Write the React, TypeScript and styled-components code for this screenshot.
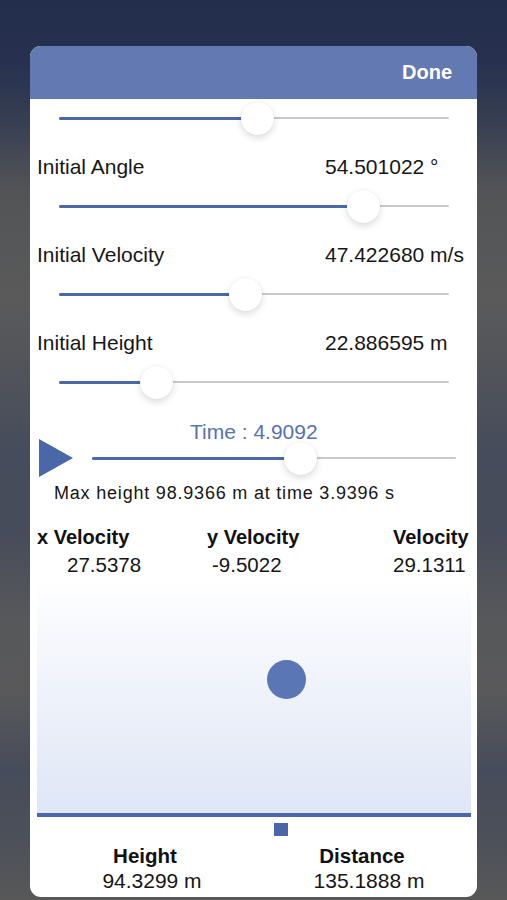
import React from 'react';
import styled, { createGlobalStyle } from 'styled-components';

// ─── Page chrome ────────────────────────────────────────────────────────────
const GlobalStyle = createGlobalStyle`
  html, body { margin: 0; padding: 0; }
  body {
    min-height: 900px;
    font-family: "Liberation Sans", Arial, sans-serif;
    background: linear-gradient(
      to bottom,
      #232e4c 0px, #27314f 60px, #363e52 120px, #525456 190px,
      #5a5a5a 300px, #50535a 380px, #464c5b 450px, #474c5a 530px,
      #57585a 620px, #59595a 690px, #474c5a 770px, #4c5059 840px, #585858 900px
    );
  }
`;

const Page = styled.div`
  padding: 46px 30px 0;
`;

const Card = styled.div`
  width: 447px;
  height: 851px;
  background: #fff;
  border-radius: 11px;
  overflow: hidden;
  display: flex;
  flex-direction: column;
`;

const Header = styled.div`
  height: 53px;
  flex-shrink: 0;
  background: #6279b1;
  display: flex;
  align-items: center;
  justify-content: flex-end;
  padding-right: 25px;
`;

const DoneButton = styled.span`
  color: #fff;
  font-weight: 700;
  font-size: 20px;
`;

const Body = styled.div`
  padding: 0 6px 0 7px;
  display: flex;
  flex-direction: column;
`;

// ─── Slider ────────────────────────────────────────────────────────────────
const SliderRow = styled.div<{ $h: number }>`
  height: ${p => p.$h}px;
  padding: 0 22px;
  display: flex;
  align-items: center;
`;

const Track = styled.div`
  position: relative;
  flex: 1;
  height: 2px;
  background: #c9c9cc;
  border-radius: 1px;
`;

const Fill = styled.div<{ $pct: number }>`
  position: absolute;
  left: 0;
  top: -0.5px;
  height: 3px;
  width: ${p => p.$pct}%;
  background: #4b68a9;
  border-radius: 1.5px;
`;

const Thumb = styled.div<{ $pct: number }>`
  position: absolute;
  left: ${p => p.$pct}%;
  top: 1px;
  width: 33px;
  height: 33px;
  margin: -16.5px 0 0 -16.5px;
  border-radius: 50%;
  background: #fff;
  box-shadow: 0 3px 7px rgba(0, 0, 0, 0.14), 0 0 1px rgba(0, 0, 0, 0.1);
`;

function Slider({ pct }: { pct: number }) {
  return (
    <Track>
      <Fill $pct={pct} />
      <Thumb $pct={pct} />
    </Track>
  );
}

// ─── Parameter rows ────────────────────────────────────────────────────────
const LabelRow = styled.div`
  height: 34px;
  padding-top: 10px;
  display: grid;
  grid-template-columns: 288px 1fr;
  align-items: center;
  font-size: 21px;
  color: #161616;
`;

const Label = styled.span``;
const Value = styled.span``;

const params = [
  { label: 'Initial Angle', value: '54.501022 °', pct: 78.2 },
  { label: 'Initial Velocity', value: '47.422680 m/s', pct: 47.7 },
  { label: 'Initial Height', value: '22.886595 m', pct: 25.1 },
];

// ─── Time / playback ───────────────────────────────────────────────────────
const TimeLabel = styled.div`
  height: 12px;
  padding-top: 22px;
  line-height: 12px;
  padding-left: 153px;
  font-size: 21px;
  color: #5672b0;
  white-space: nowrap;
`;

const PlayRow = styled.div`
  height: 40px;
  display: flex;
  align-items: center;
  padding: 0 15px 0 2px;
  gap: 19px;
`;

const PlayIcon = styled.svg`
  width: 34px;
  height: 38px;
  flex-shrink: 0;
`;

const TimeTrackWrap = styled.div`
  flex: 1;
  display: flex;
  align-items: center;
`;

const MaxHeight = styled.div`
  height: 30px;
  line-height: 30px;
  padding-left: 17px;
  font-size: 18px;
  letter-spacing: 0.8px;
  color: #161616;
  white-space: nowrap;
`;

// ─── Velocity readouts ─────────────────────────────────────────────────────
const VelocityGrid = styled.div`
  margin-top: 14px;
  display: grid;
  grid-template-columns: 170px 186px 1fr;
`;

const VelCol = styled.div`
  display: flex;
  flex-direction: column;
`;

const VelHead = styled.div`
  height: 30px;
  line-height: 30px;
  font-size: 20px;
  font-weight: 700;
  color: #111;
  white-space: nowrap;
`;

const VelValue = styled.div<{ $indent: number }>`
  height: 26px;
  line-height: 26px;
  padding-left: ${p => p.$indent}px;
  font-size: 20.5px;
  color: #161616;
`;

const velocities = [
  { head: 'x Velocity', value: '27.5378', indent: 30 },
  { head: 'y Velocity', value: '-9.5022', indent: 5 },
  { head: 'Velocity', value: '29.1311', indent: 0 },
];

// ─── Trajectory canvas ─────────────────────────────────────────────────────
const Canvas = styled.div`
  position: relative;
  margin-top: 2px;
  height: 233px;
  background: linear-gradient(to bottom, #ffffff 0%, #fafbfe 12%, #eef2fa 50%, #dfe6f6 100%);
`;

const Ball = styled.div<{ $x: number; $y: number }>`
  position: absolute;
  left: ${p => p.$x}px;
  top: ${p => p.$y}px;
  width: 39px;
  height: 39px;
  margin: -19.5px 0 0 -19.5px;
  border-radius: 50%;
  background: #5a76b4;
`;

const Ground = styled.div`
  height: 4px;
  flex-shrink: 0;
  background: #4b66a8;
`;

const MarkerStrip = styled.div`
  position: relative;
  height: 19px;
`;

const Marker = styled.div<{ $x: number }>`
  position: absolute;
  top: 6px;
  left: ${p => p.$x}px;
  width: 14px;
  height: 13px;
  background: #4b66a8;
`;

// ─── Bottom stats ──────────────────────────────────────────────────────────
const StatsGrid = styled.div`
  margin-top: 7px;
  display: grid;
  grid-template-columns: 216px 1fr;
  text-align: center;
`;

const StatHead = styled.div`
  height: 26px;
  line-height: 26px;
  font-size: 20.5px;
  font-weight: 700;
  color: #111;
`;

const StatValue = styled.div`
  height: 24px;
  line-height: 24px;
  font-size: 21px;
  color: #161616;
  padding-left: 14px;
`;

export default function App() {
  return (
    <>
      <GlobalStyle />
      <Page>
        <Card>
          <Header>
            <DoneButton>Done</DoneButton>
          </Header>
          <Body>
            <SliderRow $h={38}>
              <Slider pct={51} />
            </SliderRow>
            <div style={{ height: 3 }} />
            {params.map(p => (
              <div key={p.label}>
                <LabelRow>
                  <Label>{p.label}</Label>
                  <Value>{p.value}</Value>
                </LabelRow>
                <SliderRow $h={44}>
                  <Slider pct={p.pct} />
                </SliderRow>
              </div>
            ))}

            <TimeLabel>Time : 4.9092</TimeLabel>
            <PlayRow>
              <PlayIcon viewBox="0 0 34 38">
                <polygon points="0,0 34,19 0,38" fill="#4a67a8" />
              </PlayIcon>
              <TimeTrackWrap>
                <Slider pct={57.4} />
              </TimeTrackWrap>
            </PlayRow>
            <MaxHeight>Max height 98.9366 m at time 3.9396 s</MaxHeight>

            <VelocityGrid>
              {velocities.map(v => (
                <VelCol key={v.head}>
                  <VelHead>{v.head}</VelHead>
                  <VelValue $indent={v.indent}>{v.value}</VelValue>
                </VelCol>
              ))}
            </VelocityGrid>

            <Canvas>
              <Ball $x={249} $y={99} />
            </Canvas>
            <Ground />
            <MarkerStrip>
              <Marker $x={237} />
            </MarkerStrip>

            <StatsGrid>
              <div>
                <StatHead>Height</StatHead>
                <StatValue>94.3299 m</StatValue>
              </div>
              <div>
                <StatHead>Distance</StatHead>
                <StatValue>135.1888 m</StatValue>
              </div>
            </StatsGrid>
          </Body>
        </Card>
      </Page>
    </>
  );
}
